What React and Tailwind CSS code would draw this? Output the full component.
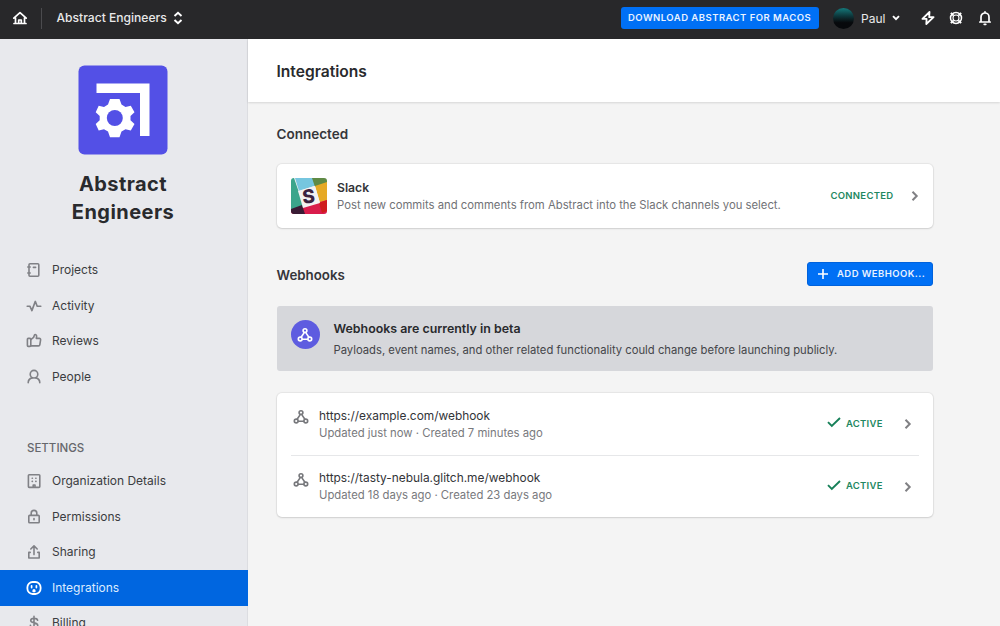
import React from "react";

function Icon({ children, className = "", size = 16, sw = 1.6 }) {
  return (
    <svg
      width={size}
      height={size}
      viewBox="0 0 16 16"
      fill="none"
      stroke="currentColor"
      strokeWidth={sw}
      strokeLinecap="round"
      strokeLinejoin="round"
      className={"shrink-0 " + className}
    >
      {children}
    </svg>
  );
}

const icons = {
  projects: (
    <>
      <rect x="3" y="1.8" width="9.8" height="12.4" rx="1" />
      <path d="M1.800 5h2.400M1.800 11h2.400M7.400 5.400h2.200" />
    </>
  ),
  activity: <path d="M1.200 8.200h2.700l2 4.400L9.300 3.400l1.900 4.800h3.600" />,
  reviews: (
    <>
      <rect x="1.400" y="5.400" width="3.400" height="8" rx="0.800" />
      <path d="M4.800 6.600 7.600 4.400 8.600 1.700c1.400-.3 2.200.6 2 1.800L10.300 5.400h3c.9 0 1.400.6 1.300 1.400l-.8 5c-.1.7-.6 1.100-1.300 1.100H4.800" />
    </>
  ),
  people: (
    <>
      <circle cx="8" cy="5.200" r="3.800" />
      <path d="M2.200 13.800c0-2.600 1.600-4.300 4-4.900M13.800 13.800c0-2.600-1.600-4.300-4-4.900" />
    </>
  ),
  organization: (
    <>
      <rect x="2.400" y="1.800" width="11.400" height="12.600" rx="0.800" />
      <path d="M6.200 5.300h.2M9.800 5.300h.2M6.200 8.400h.2M9.800 8.400h.2M7.200 13.800v-1.800h1.800v1.800" />
    </>
  ),
  permissions: (
    <>
      <rect x="2.800" y="6.400" width="10.400" height="7.400" rx="0.800" />
      <path d="M5.200 6.200V4.200a2.800 2.800 0 0 1 5.600 0v2M8 9.600v1.200" />
    </>
  ),
  sharing: <path d="M4.200 8.400H2.800V14h10.400V8.400h-1.400M8 10.600V2.400M4.800 5 8 1.900 11.200 5" />,
  integrations: (
    <>
      <rect x="1.400" y="2" width="13.200" height="12" rx="5.200" strokeWidth="1.800" />
      <path d="M5.600 5.800v1.800M10.400 5.800v1.800" strokeWidth="1.700" />
      <path d="M7.200 11.400v-.7a.8.8 0 0 1 1.600 0v.7z" />
    </>
  ),
  billing: (
    <path d="M11.600 5.200C11.200 4 9.800 3.400 8.100 3.400c-2 0-3.400.8-3.400 2.200 0 3.200 7 1.400 7 4.700 0 1.400-1.500 2.300-3.600 2.300-1.900 0-3.400-.8-3.700-2.200M8 1.400v13" />
  ),
  webhook: (
    <>
      <circle cx="8" cy="3.600" r="1.900" />
      <circle cx="3.200" cy="12" r="1.900" />
      <circle cx="12.800" cy="12" r="1.900" />
      <path d="M7.200 5.600 4.300 10M8.800 5.600l2.900 4.400M5.400 12.200h5.200" />
    </>
  ),
};

function NavItem({ icon, label, active }) {
  return (
    <a
      className={
        "flex h-[35.5px] shrink-0 items-center gap-[10px] pl-[26px] text-[12px] " +
        (active ? "bg-[#0066e0] text-[#dcebff]" : "text-[#3b3c40]")
      }
    >
      <Icon className={active ? "text-white" : "text-[#808186]"}>{icons[icon]}</Icon>
      <span>{label}</span>
    </a>
  );
}

function OrgLogo() {
  return (
    <svg width="90" height="90" viewBox="0 0 90 90" className="shrink-0">
      <rect x="0.500" y="0.500" width="89" height="89" rx="6" fill="#5350e6" />
      <path d="M18.500 18.500h53V71h-9.500V28h-43.500z" fill="#fff" />
      <path
        d="M32 34h9.500l2 5.600 4 2.300 5.300-1.200 3.700 6.600-4 3.600v4.400l4 3.600-3.700 6.600-5.300-1.200-4 2.300-2 5.600H32l-2-5.600-4-2.300-5.300 1.200-3-6.600 4-3.600v-4.400l-4-3.600 3-6.600 5.300 1.200 4-2.300z"
        fill="#fff"
      />
      <circle cx="36.800" cy="53" r="8" fill="#5350e6" />
    </svg>
  );
}

function SlackLogo() {
  return (
    <svg width="36" height="36" viewBox="0 0 36 36" className="shrink-0 rounded-[3px]">
      <rect width="36" height="36" fill="#f4f1f2" />
      <path d="M0 0h23l3 7-18 6L4 0z" fill="#76c6df" />
      <path d="M0 0h3l10 29-13 5z" fill="#3ba58b" />
      <path d="M21 0h15v5l-12 4z" fill="#5f8a45" />
      <path d="M24 8l12-4v19l-7 2z" fill="#e6a925" />
      <path d="M11 29l25-7v14H0v-4z" fill="#d91c4c" />
      <path d="M0 31l11-4 3 9H0z" fill="#3a1c35" />
      <path d="M28 25l8-3v11l-5 2z" fill="#cf1c1c" />
      <path d="M7 13l17-5 5 17-17 5z" fill="#f4f1f2" />
      <text
        x="17.500"
        y="25"
        textAnchor="middle"
        fontFamily="Inter, sans-serif"
        fontWeight="800"
        fontSize="19"
        fill="#3b2140"
        transform="rotate(-6 18 18)"
      >
        S
      </text>
    </svg>
  );
}

function Chevron() {
  return (
    <svg width="8" height="12" viewBox="0 0 8 12" fill="none" stroke="#808084" strokeWidth="2" className="shrink-0">
      <path d="M1.500 1.800 5.700 6 1.500 10.200" />
    </svg>
  );
}

function WebhookRow({ url, meta }) {
  return (
    <div className="flex h-[62px] shrink-0 items-center pr-[7px] pl-[2.5px]">
      <Icon className="-mt-[14px] mr-[9.500px] -ml-px text-[#77787c]">{icons.webhook}</Icon>
      <div className="ml-px flex-1">
        <div className="text-[11.9px] leading-[18px] text-[#333438]">{url}</div>
        <div className="text-[11.3px] leading-[17px] text-[#78797d]">{meta}</div>
      </div>
      <svg width="14" height="12" viewBox="0 0 14 12" fill="none" stroke="#178059" strokeWidth="1.900" className="-mt-[4px] mr-[5px]">
        <path d="M1 6.200 4.800 10 13 2" />
      </svg>
      <span className="mr-[20.7px] text-[9.5px] font-semibold tracking-[0.3px] text-[#228761]">ACTIVE</span>
      <Chevron />
    </div>
  );
}

export default function App() {
  return (
    <div className="flex h-[626px] w-[1000px] flex-col overflow-hidden bg-[#f4f4f4] font-[Inter,sans-serif]">
      <header className="flex h-[39px] shrink-0 items-center bg-[#28282a] pb-[3px] text-[#e8e8e9]">
        <Icon className="ml-[12px] text-white" sw={1.7}>
          <path d="M1.800 8.200 8 2.600l6.200 5.600M3.500 7.500v6h9v-6M2 13.500h12M6.700 13v-3h2.600v3" />
        </Icon>
        <div className="ml-[13px] h-[21px] w-px bg-[#4b4b4e]" />
        <span className="ml-[14.5px] text-[12.1px] font-medium">Abstract Engineers</span>
        <svg width="10" height="14" viewBox="0 0 10 14" fill="none" stroke="#fff" strokeWidth="1.900" className="ml-[6px]">
          <path d="M1.500 5 5 1.700 8.500 5M1.500 9 5 12.300 8.500 9" />
        </svg>
        <div className="ml-auto flex items-center">
          <button className="flex h-[22px] w-[198px] items-center justify-center rounded-[3px] bg-[#0070f5] text-[9.5px] font-semibold tracking-[0.48px] whitespace-nowrap text-[#e9f2ff]">
            DOWNLOAD ABSTRACT FOR MACOS
          </button>
          <div className="ml-[14px] h-[21px] w-[21px] rounded-full bg-linear-to-b from-[#127a7c] via-[#0c3438] via-40% to-[#07090c] to-70%" />
          <span className="mt-px ml-[7.500px] text-[12px]">Paul</span>
          <svg width="8" height="6" viewBox="0 0 8 6" fill="none" stroke="#fff" strokeWidth="1.900" className="ml-[6px]">
            <path d="M1 1.200 4 4.200 7 1.200" />
          </svg>
          <Icon className="ml-[20px] text-white" sw={1.800}>
            <path d="M9.500 2 2.400 8.900h4.200L6.300 14l7.300-6.800H9.200z" />
          </Icon>
          <Icon className="ml-[12.500px] text-white" sw={1.700}>
            <circle cx="8" cy="8" r="5.500" strokeWidth="1.500" />
            <circle cx="8" cy="8" r="3" strokeWidth="1.100" />
            <path d="M2.900 2.900l2.700 2.700M13.100 2.900l-2.700 2.700M2.900 13.100l2.700-2.700M13.100 13.100l-2.700-2.700" strokeWidth="2" strokeLinecap="butt" />
          </Icon>
          <Icon className="mr-[7.500px] ml-[12.500px] text-white" sw={1.700}>
            <path d="M2.800 12h10.400M4 12V7a4 4 0 0 1 8 0v5M8 2.800V1.800M7.200 14.300h1.600" />
          </Icon>
        </div>
      </header>
      <div className="flex min-h-0 flex-1">
        <aside className="flex w-[248px] shrink-0 flex-col overflow-hidden bg-[#e8e9ed] shadow-[inset_-1px_0_0_#dcdde1]">
          <div className="flex h-[213.500px] shrink-0 flex-col items-center pt-[26px] pr-[2px]">
            <OrgLogo />
            <h1 className="mt-[15px] w-[140px] text-center text-[20px] leading-[28px] font-bold tracking-[0.45px] text-[#292a2d]">
              Abstract Engineers
            </h1>
          </div>
          <nav className="flex flex-col">
            <NavItem icon="projects" label="Projects" />
            <NavItem icon="activity" label="Activity" />
            <NavItem icon="reviews" label="Reviews" />
            <NavItem icon="people" label="People" />
          </nav>
          <div className="mt-[44px] h-[25px] shrink-0 pl-[27px] text-[11.500px] leading-[18px] font-medium text-[#66676c]">
            SETTINGS
          </div>
          <nav className="flex flex-col">
            <NavItem icon="organization" label="Organization Details" />
            <NavItem icon="permissions" label="Permissions" />
            <NavItem icon="sharing" label="Sharing" />
            <NavItem icon="integrations" label="Integrations" active />
            <NavItem icon="billing" label="Billing" />
          </nav>
        </aside>
        <main className="flex min-w-0 flex-1 flex-col">
          <div className="flex h-[63px] shrink-0 items-center bg-white pt-[2px] pl-[28.5px] shadow-[0_1px_2px_rgba(0,0,0,0.12)]">
            <h2 className="text-[15.6px] font-semibold text-[#292a2d]">Integrations</h2>
          </div>
          <div className="flex w-[685px] flex-col pl-[28.5px]">
            <h3 className="mt-[22px] text-[13.500px] leading-[20px] font-semibold text-[#35363a]">Connected</h3>
            <section className="mt-[20px] flex h-[64px] items-center rounded-[5px] bg-white pr-[14.500px] pl-[14px] shadow-[0_0_1px_1px_rgba(0,0,0,0.06),0_1px_2px_rgba(0,0,0,0.1)]">
              <SlackLogo />
              <div className="mt-px ml-[10.500px] flex-1">
                <div className="text-[12.200px] leading-[18px] font-semibold text-[#333438]">Slack</div>
                <div className="text-[11.3px] leading-[17px] text-[#717276]">
                  Post new commits and comments from Abstract into the Slack channels you select.
                </div>
              </div>
              <span className="mr-[17px] text-[9.5px] font-semibold tracking-[0.3px] text-[#228761]">CONNECTED</span>
              <Chevron />
            </section>
            <div className="mt-[34px] flex h-[24px] items-center justify-between">
              <h3 className="mt-px text-[13.300px] leading-[20px] font-semibold text-[#35363a]">Webhooks</h3>
              <button className="flex h-[24px] w-[126px] items-center rounded-[3px] border border-[#0062dc] bg-[#0070f5] pl-[9px] text-[9.5px] font-semibold tracking-[0.43px] whitespace-nowrap text-[#e9f2ff]">
                <svg width="12" height="12" viewBox="0 0 12 12" stroke="#fff" strokeWidth="1.600" className="mr-[8px] shrink-0">
                  <path d="M6 1v10M1 6h10" />
                </svg>
                ADD WEBHOOK...
              </button>
            </div>
            <section className="mt-[20px] flex h-[65px] rounded-[3px] bg-[#d6d7db] pt-[14px] pl-[14px]">
              <div className="flex h-[29px] w-[29px] items-center justify-center rounded-full bg-[#5e5ce0] text-white">
                <Icon>{icons.webhook}</Icon>
              </div>
              <div className="ml-[14px]">
                <div className="text-[12.400px] leading-[18px] font-semibold text-[#292a2d]">Webhooks are currently in beta</div>
                <div className="mt-[3px] text-[11.25px] leading-[18px] text-[#444549]">
                  Payloads, event names, and other related functionality could change before launching publicly.
                </div>
              </div>
            </section>
            <section className="mt-[22px] flex h-[124px] flex-col rounded-[5px] bg-white px-[14.500px] shadow-[0_0_1px_1px_rgba(0,0,0,0.06),0_1px_2px_rgba(0,0,0,0.1)]">
              <WebhookRow url="https://example.com/webhook" meta="Updated just now · Created 7 minutes ago" />
              <div className="h-px shrink-0 bg-[#e6e7e9]" />
              <div className="-mt-[0.5px]">
                <WebhookRow url="https://tasty-nebula.glitch.me/webhook" meta="Updated 18 days ago · Created 23 days ago" />
              </div>
            </section>
          </div>
        </main>
      </div>
    </div>
  );
}
